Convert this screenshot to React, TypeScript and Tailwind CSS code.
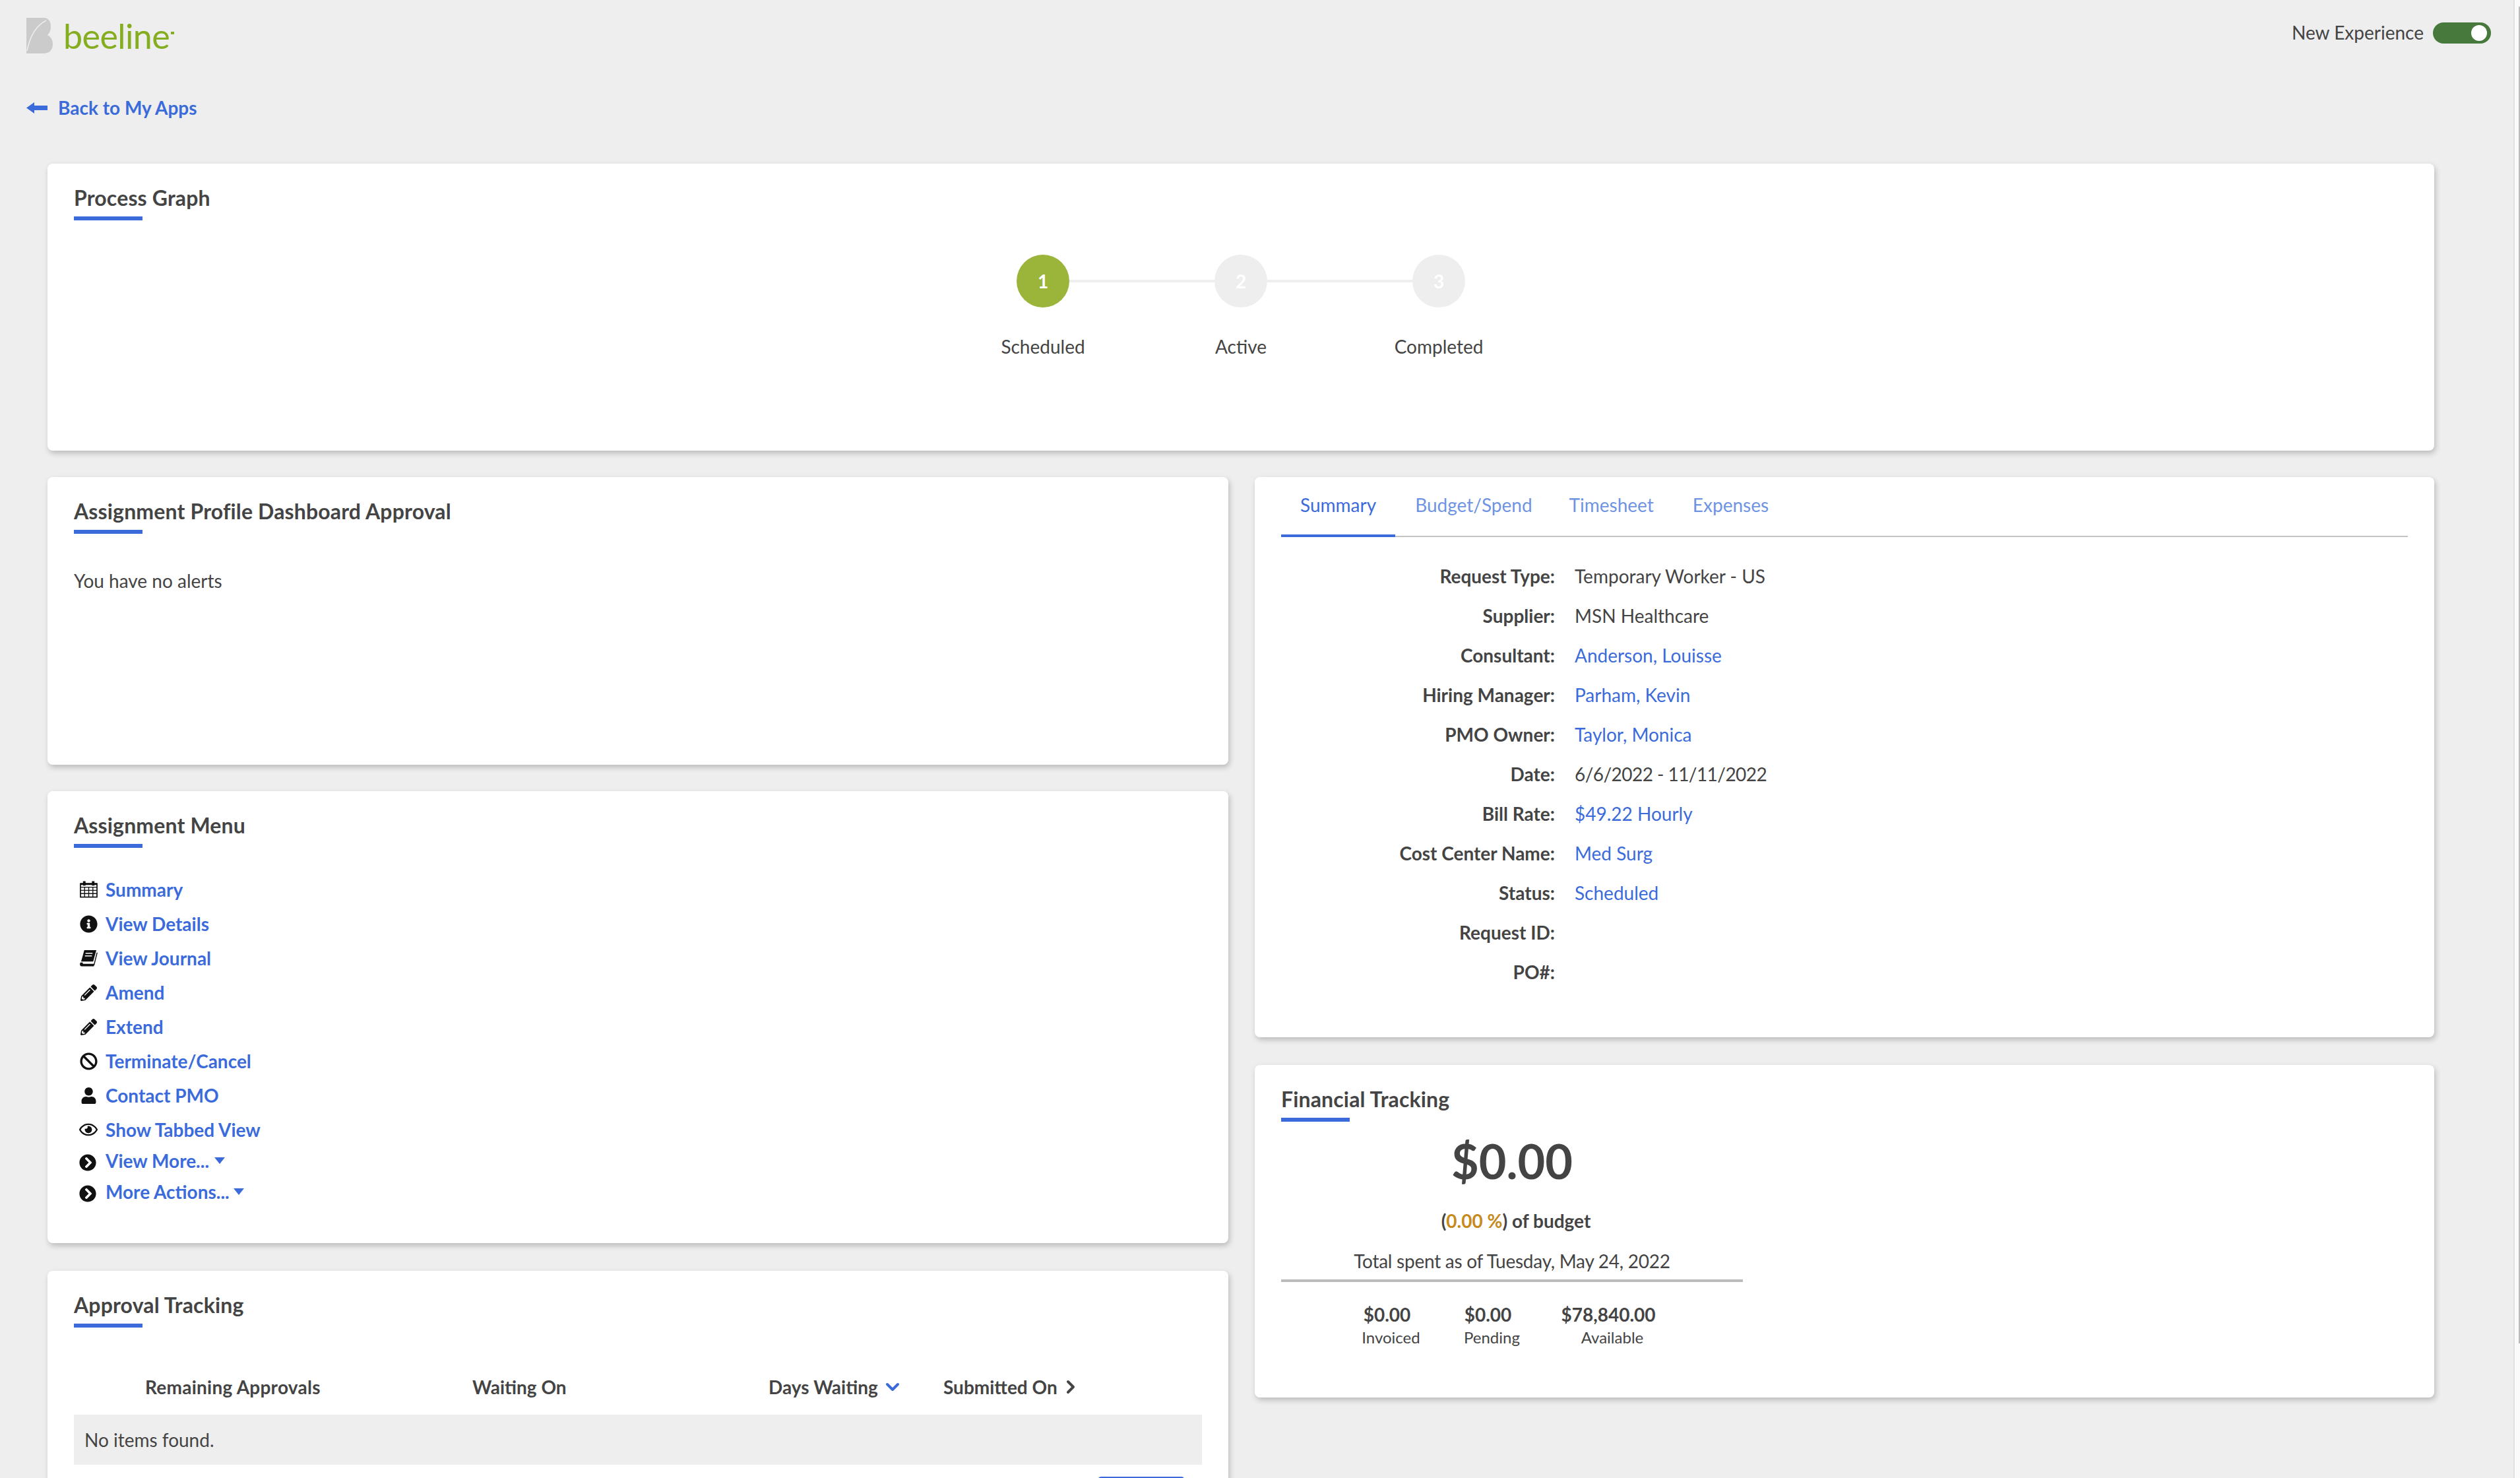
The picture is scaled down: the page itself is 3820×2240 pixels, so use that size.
import {ReactNode} from "react"
import {FaBan, FaInfoCircle, FaPencilAlt, FaRegEye, FaUser, FaChevronCircleRight} from "react-icons/fa"
import {ChevronDown, ChevronRight} from "lucide-react"

const Card = ({title, className, children}: {title?: string; className?: string; children: ReactNode}) => (
  <div className={`bg-white rounded-lg shadow-[2px_4px_8px_rgba(0,0,0,0.22)] px-10 ${className}`}>
    {title && (
      <div className="pt-[30px]">
        <h2 className="text-[32px] leading-[44px] font-bold text-[#444] tracking-[0.15px]">{title}</h2>
        <div className="w-[104px] h-[6px] bg-[#3b6bdb] mt-[6px]" />
      </div>
    )}
    {children}
  </div>
)

const CalendarIcon = () => (
  <svg viewBox="0 0 28 26" className="w-[27px] h-[26px]" fill="none" stroke="#111" strokeWidth="1.8">
    <rect x="1" y="4" width="26" height="21" />
    <path d="M1 9.5h26M1 14.5h26M1 19.5h26M7.5 9v16M14 9v16M20.5 9v16" strokeWidth="1.4" />
    <rect x="5" y="0" width="4" height="7" fill="#111" stroke="none" />
    <rect x="19" y="0" width="4" height="7" fill="#111" stroke="none" />
    <rect x="1" y="3" width="26" height="3" fill="#111" stroke="none" />
  </svg>
)

const BookIcon = () => (
  <svg viewBox="0 0 28 26" className="w-[27px] h-[25px]" fill="#111">
    <path d="M7 0h19l-5 18H2z" />
    <path d="M1 19.5c-1.5 2-1.5 6 2 6h19l1-4H5.5c-1.500 0-1.500-2.500 0-2.500z" />
    <path d="M26.500 4h1.500l-5 20h-1.500z" />
    <path d="M9 5h11M8 9h11" stroke="#fff" strokeWidth="1.500" />
  </svg>
)

const menu = [
  {label: "Summary", icon: <CalendarIcon />},
  {label: "View Details", icon: <FaInfoCircle size={27} />},
  {label: "View Journal", icon: <BookIcon />},
  {label: "Amend", icon: <FaPencilAlt size={25} />},
  {label: "Extend", icon: <FaPencilAlt size={25} />},
  {label: "Terminate/Cancel", icon: <FaBan size={27} />},
  {label: "Contact PMO", icon: <FaUser size={25} />},
  {label: "Show Tabbed View", icon: <FaRegEye size={28} />},
]

const details: {label: string; value?: string; link?: boolean; tight?: boolean}[] = [
  {label: "Request Type:", value: "Temporary Worker - US"},
  {label: "Supplier:", value: "MSN Healthcare"},
  {label: "Consultant:", value: "Anderson, Louisse", link: true},
  {label: "Hiring Manager:", value: "Parham, Kevin", link: true},
  {label: "PMO Owner:", value: "Taylor, Monica", link: true},
  {label: "Date:", value: "6/6/2022 - 11/11/2022", tight: true},
  {label: "Bill Rate:", value: "$49.22 Hourly", link: true},
  {label: "Cost Center Name:", value: "Med Surg", link: true},
  {label: "Status:", value: "Scheduled", link: true},
  {label: "Request ID:"},
  {label: "PO#:"},
]

const App = () => {
  return (
    <div
      className="h-[2240px] w-[3820px] overflow-hidden bg-[#eeeeee] text-[#444] text-[28px] leading-[40px] flex"
      style={{fontFamily: "Lato, 'Noto Sans', sans-serif"}}>
      <div className="w-[3810px]">
        {/* top bar */}
        <div className="flex items-start justify-between pl-10 pr-[34px] h-[140px]">
          <div className="flex items-center gap-4 pt-[27px]">
            <svg viewBox="0 0 40 54" className="w-10 h-[54px]">
              <path d="M0 0h26c8 0 11 6 11 13 0 6-2 10-5 13 5 3 8 7 8 14 0 9-6 14-14 14H0z" fill="#cbcbcb" />
              <path d="M1 50C5 30 14 12 30 4" stroke="#eee" strokeWidth="1.500" fill="none" />
            </svg>
            <span className="text-[52px] leading-[50px] text-[#84ad1f] tracking-[-0.6px]">beeline</span>
            <span className="-ml-[14px] -mt-[8px] w-[5px] h-[4px] bg-[#84ad1f]" />
          </div>
          <div className="flex items-center gap-[14px] pt-[30px]">
            <span className="text-[28px] leading-10 -mt-[1px]">New Experience</span>
            <div className="w-[88px] h-8 rounded-full bg-[#47793c] flex items-center justify-end pr-[6px]">
              <div className="w-6 h-6 rounded-full bg-white" />
            </div>
          </div>
        </div>
        <a className="flex items-center gap-4 pl-10 h-[48px] pb-[2px] text-[#3b6bdb] font-bold">
          <svg viewBox="0 0 32 17" className="w-8 h-[17px]" fill="#3b6bdb">
            <path d="M0 8.500 12 0v5h20v7H12v5z" />
          </svg>
          Back to My Apps
        </a>

        <div className="pl-[72px] pr-[120px] pt-[60px] flex flex-col">
          {/* process graph */}
          <Card title="Process Graph" className="h-[435px]">
            <div className="flex flex-col items-center mt-[52px]">
              <div className="flex items-center">
                <div className="w-20 h-20 rounded-full bg-[#9ab53a] flex items-center justify-center text-white font-bold">1</div>
                <div className="w-[220px] h-1 bg-[#eeeeee]" />
                <div className="w-20 h-20 rounded-full bg-[#eeeeee] flex items-center justify-center text-white font-bold">2</div>
                <div className="w-[220px] h-1 bg-[#eeeeee]" />
                <div className="w-20 h-20 rounded-full bg-[#eeeeee] flex items-center justify-center text-white font-bold">3</div>
              </div>
              <div className="grid grid-cols-[300px_300px_300px] text-center mt-[39px]">
                <span>Scheduled</span>
                <span>Active</span>
                <span>Completed</span>
              </div>
            </div>
          </Card>

          <div className="grid grid-cols-[1790px_1788px] gap-x-10 mt-10">
            <div className="flex flex-col">
              <Card title="Assignment Profile Dashboard Approval" className="h-[436px]">
                <p className="mt-[51px]">You have no alerts</p>
              </Card>

              <Card title="Assignment Menu" className="h-[685px] mt-10">
                <ul className="mt-[37px] flex flex-col font-bold text-[#3b6bdb]">
                  {menu.map((item) => (
                    <li key={item.label} className="flex items-center h-[52px]">
                      <span className="w-12 flex justify-center pl-[2px] pr-[6px] text-[#111]">{item.icon}</span>
                      {item.label}
                    </li>
                  ))}
                  <li className="flex items-center h-[46px] -mt-[2px]">
                    <span className="w-12 flex justify-center pr-[6px] text-[#111] pt-[6px]">
                      <FaChevronCircleRight size={26} />
                    </span>
                    View More...
                    <span className="ml-2 border-x-[8px] border-t-[10px] border-x-transparent border-t-[#3b6bdb]" />
                  </li>
                  <li className="flex items-center h-[48px]">
                    <span className="w-12 flex justify-center pr-[6px] text-[#111] pt-[6px]">
                      <FaChevronCircleRight size={26} />
                    </span>
                    More Actions...
                    <span className="ml-[6px] border-x-[8px] border-t-[10px] border-x-transparent border-t-[#3b6bdb]" />
                  </li>
                </ul>
              </Card>

              <Card title="Approval Tracking" className="h-[400px] mt-[42px]">
                <div className="grid grid-cols-[108px_496px_449px_265px_1fr] mt-[70px] font-bold h-[40px] items-center">
                  <span />
                  <span className="tracking-[0.25px]">Remaining Approvals</span>
                  <span>Waiting On</span>
                  <span className="flex items-center gap-[6px]">
                    Days Waiting
                    <ChevronDown size={32} strokeWidth={3} className="text-[#3b6bdb]" />
                  </span>
                  <span className="flex items-center gap-1">
                    Submitted On
                    <ChevronRight size={32} strokeWidth={3} />
                  </span>
                </div>
                <div className="bg-[#eeeeee] h-[76px] mt-[22px] px-4 flex items-center">No items found.</div>
                <div className="flex justify-end pr-[27px] mt-[18px]">
                  <div className="w-[130px] h-10 bg-[#3b6bdb] rounded-t" />
                </div>
              </Card>
            </div>

            <div className="flex flex-col">
              <Card className="h-[849px]">
                <div className="flex border-b-2 border-[#c4c4c4] h-[91px]">
                  <span className="px-[29px] pt-[22px] h-[91px] border-b-4 border-[#3b6bdb] text-[#3b6bdb]">Summary</span>
                  <span className="px-7 pt-[22px] ml-[2px] text-[#6f94e3]">Budget/Spend</span>
                  <span className="px-7 pt-[22px] text-[#6f94e3]">Timesheet</span>
                  <span className="px-7 pt-[22px] ml-[3px] text-[#6f94e3]">Expenses</span>
                </div>
                <dl className="grid grid-cols-[415px_1fr] gap-x-[30px] mt-[29px]">
                  {details.map((row) => (
                    <div key={row.label} className="contents">
                      <dt className="text-right font-bold h-[60px] flex items-center justify-end">{row.label}</dt>
                      <dd
                        className={`h-[60px] flex items-center ${row.link ? "text-[#3b6bdb]" : ""} ${
                          row.tight ? "tracking-[-0.55px]" : ""
                        }`}>
                        {row.value}
                      </dd>
                    </div>
                  ))}
                </dl>
              </Card>

              <Card title="Financial Tracking" className="h-[504px] mt-[42px]">
                <div className="w-[700px] text-center">
                  <div className="text-[72px] leading-[90px] font-bold mt-[14px]">$0.00</div>
                  <div className="font-bold mt-[26px] pl-3">
                    (<span className="text-[#c68a1d]">0.00 %</span>) of budget
                  </div>
                  <div className="mt-[21px] tracking-[-0.25px]">Total spent as of Tuesday, May 24, 2022</div>
                  <div className="h-1 bg-[#bbbbbb] mt-2" />
                  <div className="flex mt-[29px] pl-[100px] font-bold">
                    <div className="w-[125px] -ml-[2px]">$0.00</div>
                    <div className="w-[125px] ml-[28px]">$0.00</div>
                    <div className="w-[200px] ml-5">$78,840.00</div>
                  </div>
                  <div className="flex pl-[100px] text-[24px] leading-[36px] -mt-[3px]">
                    <div className="w-[125px] pl-2">Invoiced</div>
                    <div className="w-[125px] ml-[28px] pl-2">Pending</div>
                    <div className="w-[200px] ml-5 pl-2">Available</div>
                  </div>
                </div>
              </Card>
            </div>
          </div>
        </div>
      </div>
      {/* scrollbar */}
      <div className="w-[10px] border-l-2 border-[#e0e0e0] h-full bg-[#fafafa] flex justify-end">
        <div className="w-[2px] h-[2026px] mt-[10px] bg-[#bbbbbb]" />
      </div>
    </div>
  )
}

export default App
